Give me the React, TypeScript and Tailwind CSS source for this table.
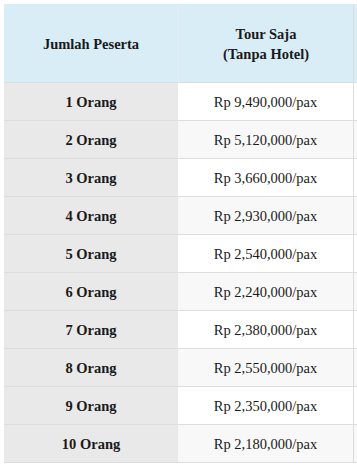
import React from "react";

const rows: [string, string][] = [
  ["1 Orang", "Rp 9,490,000/pax"],
  ["2 Orang", "Rp 5,120,000/pax"],
  ["3 Orang", "Rp 3,660,000/pax"],
  ["4 Orang", "Rp 2,930,000/pax"],
  ["5 Orang", "Rp 2,540,000/pax"],
  ["6 Orang", "Rp 2,240,000/pax"],
  ["7 Orang", "Rp 2,380,000/pax"],
  ["8 Orang", "Rp 2,550,000/pax"],
  ["9 Orang", "Rp 2,350,000/pax"],
  ["10 Orang", "Rp 2,180,000/pax"],
];

export default function App() {
  return (
    <div
      className="w-[357px] h-[465px] overflow-hidden bg-white text-[#1a1a1a]"
      style={{ fontFamily: '"Liberation Serif", "Times New Roman", serif' }}
    >
      <div className="ml-[4px] mt-[4px] w-[450px]">
        <div className="flex h-[79px] bg-[#d9edf7] border-b border-[#dcdcdc] text-[14.5px] font-bold leading-[20px]">
          <div className="w-[174px] shrink-0 flex items-center justify-center text-center pt-[2px]">
            Jumlah Peserta
          </div>
          <div className="w-[176px] shrink-0 border-l border-[#e6eef2] border-r border-r-[#dcdcdc] flex items-center justify-center text-center pt-[2px]">
            Tour Saja
            <br />
            (Tanpa Hotel)
          </div>
          <div className="flex-1" />
        </div>
        {rows.map(([a, b], i) => (
          <div key={a} className="flex h-[38px] border-b border-[#dddddd]">
            <div className="w-[174px] shrink-0 bg-[#e9e9e9] flex items-center justify-center text-[14.5px] font-bold pt-[2px]">
              {a}
            </div>
            <div
              className={`w-[176px] shrink-0 border-r border-[#dcdcdc] flex items-center justify-center text-[14.5px] pt-[2px] ${
                i % 2 === 1 ? "bg-[#f8f8f8]" : "bg-white"
              }`}
            >
              {b}
            </div>
            <div className={`flex-1 ${i % 2 === 1 ? "bg-[#f8f8f8]" : "bg-white"}`} />
          </div>
        ))}
      </div>
    </div>
  );
}
